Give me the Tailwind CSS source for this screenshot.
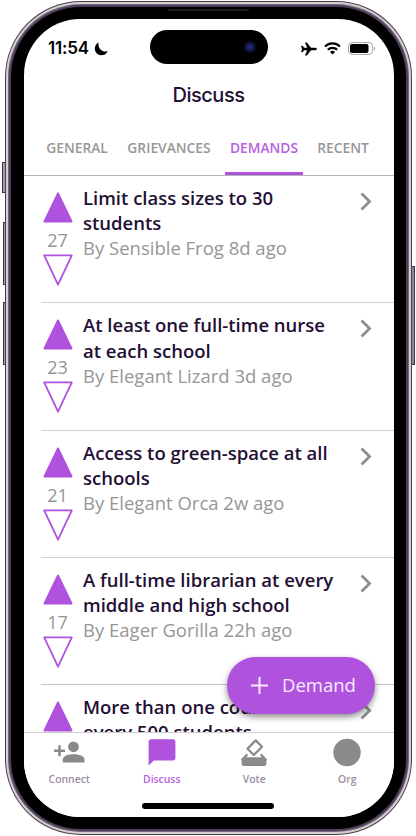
<!DOCTYPE html>
<html lang="en">
<head>
<meta charset="utf-8">
<title>Discuss</title>
<script src="https://cdn.jsdelivr.net/npm/@tailwindcss/browser@4"></script>
</head>
<body class="bg-white">
<svg class="hidden">
  <symbol id="up" viewBox="0 0 30 31"><path d="M15 1.500 28.500 29.500H1.500Z" fill="#af52de" stroke="#af52de" stroke-width="2" stroke-linejoin="round"/></symbol>
  <symbol id="down" viewBox="0 0 30 32"><path d="M1.200 1.300H28.800L15 30.700Z" fill="#fff" stroke="#af52de" stroke-width="1.800" stroke-linejoin="round"/></symbol>
  <symbol id="chev" viewBox="0 0 12 19"><path d="M1.500 1.500 9.600 9.500 1.500 17.500" fill="none" stroke="#8e8e8e" stroke-width="2.800"/></symbol>
</svg>
<div class="relative w-[416px] h-[836px] overflow-hidden font-['Open_Sans',sans-serif]">
  <!-- side buttons -->
  <div class="absolute left-[2px] top-[162px] w-[6px] h-[31px] border border-[#3b3347] bg-[#a49bae]"></div>
  <div class="absolute left-[3px] top-[222px] w-[5px] h-[63px] border border-[#3b3347] bg-[#a49bae]"></div>
  <div class="absolute left-[3px] top-[302px] w-[5px] h-[63px] border border-[#3b3347] bg-[#a49bae]"></div>
  <div class="absolute left-[410px] top-[266px] w-[5px] h-[99px] border border-[#3b3347] bg-[#8f869a]"></div>
  <!-- phone body -->
  <div class="absolute left-[5px] top-[1px] w-[407px] h-[834px] rounded-[76px] bg-[#47404f] p-px">
    <div class="w-full h-full rounded-[75px] bg-[#d8cfcf] p-[2px]">
      <div class="w-full h-full rounded-[73px] bg-[#75697f] p-px">
        <div class="w-full h-full rounded-[72px] bg-[#4b4059] p-[2px]">
          <div class="w-full h-full rounded-[70px] bg-black"></div>
        </div>
      </div>
    </div>
  </div>
  <div class="absolute left-[168px] top-[9px] w-[81px] h-[2px] bg-[#1c1c1e] rounded-full"></div>
  <!-- screen -->
  <div class="absolute left-[24px] top-[19px] w-[370px] h-[798px] rounded-[56px] bg-white overflow-hidden flex flex-col">
    <header class="h-[156px] shrink-0 border-b border-[#b4b4b4] flex flex-col box-content">
      <div class="h-[59px] pl-[24px] pr-[18px] flex items-center justify-between">
        <div class="flex items-center gap-[5px]">
          <span class="font-['Inter',sans-serif] font-semibold text-[17px] tracking-[-0.200px] text-black">11:54</span>
          <svg class="w-[14px] h-[14px]" viewBox="0 0 13 13"><path d="M4.300.5A6.200 6.200 0 1 0 12.700 8.400C8.200 10.200 3.200 6 4.300.5Z"/></svg>
        </div>
        <div class="flex items-center gap-[7px]">
          <svg class="w-[16px] h-[14px]" viewBox="0 0 16 14"><path d="M15.800 7c0 .7-.9 1.100-2 1.100H10L5.900 13.300H4.300L6.400 8.100H3.200L1.600 10H.4L1.200 7 .4 4h1.200l1.600 1.900h3.200L4.300.7h1.600L10 5.900h3.800c1.100 0 2 .4 2 1.100Z" stroke="#000" stroke-width=".4"/></svg>
          <svg class="w-[17px] h-[13px]" viewBox="0 0 17 13" fill="none" stroke="#000" stroke-width="2.200"><path d="M1 4.500a10.700 10.700 0 0 1 15 0"/><path d="M3.800 7.800a6.700 6.700 0 0 1 9.400 0"/><path d="M8.500 12.400 6 9.900a3.600 3.600 0 0 1 5 0Z" fill="#000" stroke="none"/></svg>
          <svg class="w-[28px] h-[13px]" viewBox="0 0 28 13"><rect x=".5" y=".5" width="24" height="12" rx="3.600" fill="none" stroke="#a8a8a8"/><rect x="2" y="2" width="18.500" height="9" rx="2"/><path d="M26 4.500c1.600.6 1.600 3.400 0 4Z" fill="#a8a8a8"/></svg>
        </div>
      </div>
      <h1 class="h-[34px] pr-[1px] text-center text-[20px] leading-[34px] tracking-[-0.500px] font-medium font-['Inter',sans-serif] text-[#240f35]">Discuss</h1>
      <nav class="mt-auto h-[55px] pl-[13px] flex text-[13.800px] leading-[55px] font-semibold text-[#979797]">
        <span class="w-[80px] text-center">GENERAL</span>
        <span class="w-[104px] text-center">GRIEVANCES</span>
        <span class="ml-[4px] w-[78px] text-center border-b-[3px] border-[#af52de] text-[#b75fe3]">DEMANDS</span>
        <span class="w-[80px] text-center">RECENT</span>
      </nav>
    </header>
    <main class="relative h-[556px] shrink-0 overflow-hidden">
      <article class="h-[127.300px] ml-[17px] flex border-b border-[#d2d2d2]">
        <div class="w-[33px] pt-[16px] flex flex-col items-center"><svg class="w-[30px] h-[31px] shrink-0"><use href="#up"/></svg><span class="h-[31px] leading-[34px] text-[18px] text-[#969696]">27</span><svg class="w-[30px] h-[32px] shrink-0"><use href="#down"/></svg></div>
        <div class="ml-[9px] pt-[9px] w-[260px] text-[18.500px] leading-[25.200px] whitespace-nowrap"><h2 class="font-semibold text-[#240f35]">Limit class sizes to 30<br>students</h2><p class="text-[#969696]">By Sensible Frog 8d ago</p></div>
        <svg class="ml-[17px] mt-[16px] w-[12px] h-[19px]"><use href="#chev"/></svg>
      </article>
      <article class="h-[127.300px] ml-[17px] flex border-b border-[#d2d2d2]">
        <div class="w-[33px] pt-[16px] flex flex-col items-center"><svg class="w-[30px] h-[31px] shrink-0"><use href="#up"/></svg><span class="h-[31px] leading-[34px] text-[18px] text-[#969696]">23</span><svg class="w-[30px] h-[32px] shrink-0"><use href="#down"/></svg></div>
        <div class="ml-[9px] pt-[9px] w-[260px] text-[18.500px] leading-[25.200px] whitespace-nowrap"><h2 class="font-semibold text-[#240f35]">At least one full-time nurse<br>at each school</h2><p class="text-[#969696]">By Elegant Lizard 3d ago</p></div>
        <svg class="ml-[17px] mt-[16px] w-[12px] h-[19px]"><use href="#chev"/></svg>
      </article>
      <article class="h-[127.300px] ml-[17px] flex border-b border-[#d2d2d2]">
        <div class="w-[33px] pt-[16px] flex flex-col items-center"><svg class="w-[30px] h-[31px] shrink-0"><use href="#up"/></svg><span class="h-[31px] leading-[34px] text-[18px] text-[#969696]">21</span><svg class="w-[30px] h-[32px] shrink-0"><use href="#down"/></svg></div>
        <div class="ml-[9px] pt-[9px] w-[260px] text-[18.500px] leading-[25.200px] whitespace-nowrap"><h2 class="font-semibold text-[#240f35]">Access to green-space at all<br>schools</h2><p class="text-[#969696]">By Elegant Orca 2w ago</p></div>
        <svg class="ml-[17px] mt-[16px] w-[12px] h-[19px]"><use href="#chev"/></svg>
      </article>
      <article class="h-[127.300px] ml-[17px] flex border-b border-[#c4c4c4]">
        <div class="w-[33px] pt-[16px] flex flex-col items-center"><svg class="w-[30px] h-[31px] shrink-0"><use href="#up"/></svg><span class="h-[31px] leading-[34px] text-[18px] text-[#969696]">17</span><svg class="w-[30px] h-[32px] shrink-0"><use href="#down"/></svg></div>
        <div class="ml-[9px] pt-[9px] w-[260px] text-[18.500px] leading-[25.200px] whitespace-nowrap"><h2 class="font-semibold text-[#240f35]">A full-time librarian at every<br>middle and high school</h2><p class="text-[#969696]">By Eager Gorilla 22h ago</p></div>
        <svg class="ml-[17px] mt-[16px] w-[12px] h-[19px]"><use href="#chev"/></svg>
      </article>
      <article class="h-[127.300px] ml-[17px] flex">
        <div class="w-[33px] pt-[16px] flex flex-col items-center"><svg class="w-[30px] h-[31px] shrink-0"><use href="#up"/></svg></div>
        <div class="ml-[9px] pt-[9px] w-[260px] text-[18.500px] leading-[25.200px] whitespace-nowrap"><h2 class="font-semibold text-[#240f35]">More than one counselor<br>every 500 students</h2></div>
        <svg class="ml-[17px] mt-[16px] w-[12px] h-[19px]"><use href="#chev"/></svg>
      </article>
      <button class="absolute left-[203px] top-[481px] w-[148px] h-[57px] rounded-full bg-[#af52de] shadow-[0_3px_6px_rgba(0,0,0,0.45)] flex items-center pl-[24px] text-[#f8ebff] text-[18.500px]">
        <svg class="w-[17px] h-[17px] mr-[14px]" viewBox="0 0 17 17" fill="none" stroke="#f8ebff" stroke-width="2"><path d="M8.500 0v17M0 8.500h17"/></svg><span class="pb-[1px]">Demand</span>
      </button>
    </main>
    <footer class="h-[85px] shrink-0 border-t border-[#cfcfcf] flex flex-col items-center bg-white">
      <div class="h-[70px] w-full grid grid-cols-4 pt-[5px] text-[10.400px] font-semibold leading-[16px] text-[#988e9f]">
        <div class="flex flex-col items-center pr-[2px]"><svg class="w-[31px] h-[30px] mb-[3px]" viewBox="0 0 31 30" fill="#8a8a8a"><circle cx="19.500" cy="8.800" r="5.400"/><path d="M8.700 24.500v-3c0-3.500 5.500-5.300 10.900-5.300s10.900 1.800 10.900 5.300v3Z"/><path d="M5.500 7.300v11M0 12.800h11" stroke="#8a8a8a" stroke-width="2.500"/></svg><span>Connect</span></div>
        <div class="flex flex-col items-center pr-[2px] text-[#b75fe3]"><svg class="w-[28px] h-[30px] mb-[3px]" viewBox="0 0 28 30" fill="#af52de"><path d="M3.200 1.200h21.600a2.600 2.600 0 0 1 2.600 2.600v16a2.600 2.600 0 0 1-2.600 2.600H5.900L.6 27.600V3.800a2.600 2.600 0 0 1 2.600-2.600Z"/></svg><span>Discuss</span></div>
        <div class="flex flex-col items-center pr-[2px]"><svg class="w-[26px] h-[30px] mb-[3px]" viewBox="0 0 26 30"><path d="M14.700 2.400 21 8.700 12.800 17 6.500 10.700Z" fill="none" stroke="#8a8a8a" stroke-width="2.300" stroke-linejoin="round"/><path d="M6.300 16.200 2.500 20.500H23.500L19.700 16.200" fill="none" stroke="#8a8a8a" stroke-width="2.300"/><path d="M.6 20.500h24.800v5a2.500 2.500 0 0 1-2.500 2.500H3.100a2.500 2.500 0 0 1-2.500-2.500Z" fill="#8a8a8a"/></svg><span>Vote</span></div>
        <div class="flex flex-col items-center pr-[1px]"><svg class="w-[28px] h-[30px] mb-[3px]" viewBox="0 0 28 30"><circle cx="14" cy="14.500" r="13.700" fill="#8a8a8a"/></svg><span>Org</span></div>
      </div>
      <div class="w-[132px] h-[6px] mr-[2px] rounded-full bg-black"></div>
    </footer>
  </div>
  <!-- camera island -->
  <div class="absolute left-[150px] top-[30px] w-[118px] h-[34px] rounded-full bg-black"><div class="absolute right-[12px] top-[11px] w-[12px] h-[12px] rounded-full bg-[radial-gradient(circle,#26309a_0%,#11153f_45%,#0b0a14_80%)]"></div></div>
</div>
</body>
</html>
